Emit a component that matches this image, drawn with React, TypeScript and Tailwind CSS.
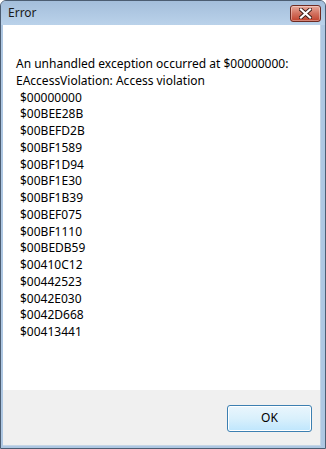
const ADDRESSES = [
  '$00000000',
  '$00BEE28B',
  '$00BEFD2B',
  '$00BF1589',
  '$00BF1D94',
  '$00BF1E30',
  '$00BF1B39',
  '$00BEF075',
  '$00BF1110',
  '$00BEDB59',
  '$00410C12',
  '$00442523',
  '$0042E030',
  '$0042D668',
  '$00413441',
];

function CloseButton() {
  return (
    <button className="relative w-[31px] h-[17px] rounded-[3px] border border-[#6e2b22] bg-gradient-to-b from-[#e8a99b] via-[#d2715f] to-[#c0402b] shadow-[inset_0_0_0_1px_rgba(255,255,255,0.35)] flex items-center justify-center">
      <svg width="13" height="11" viewBox="0 0 13 11">
        <path
          d="M2 1.5 L11 9.5 M11 1.5 L2 9.5"
          stroke="#3b1d18"
          strokeWidth="4"
          strokeLinecap="square"
        />
        <path
          d="M2 1.5 L11 9.5 M11 1.5 L2 9.5"
          stroke="#ffffff"
          strokeWidth="2.2"
          strokeLinecap="square"
        />
      </svg>
    </button>
  );
}

export default function App() {
  return (
    <div className="w-[326px] h-[449px] bg-white" style={{ fontFamily: '"Noto Sans", "Open Sans", sans-serif' }}>
      <div className="w-full h-full flex flex-col rounded-t-[6px] border border-[#4c5d72] bg-[#aec7e2] overflow-hidden">
        {/* title bar */}
        <div className="h-[24px] flex items-center justify-between pl-[7px] pr-[4px] bg-gradient-to-b from-[#a4bedb] to-[#bad2ea]">
          <span className="text-[12px] text-[#1a1a1a] leading-none">Error</span>
          <CloseButton />
        </div>

        {/* client */}
        <div className="flex-1 flex flex-col ml-[2px] mr-[4px] mb-[2px] border-r border-b border-[#c5d5e6]">
          <div className="flex-1 bg-white pt-[31px] pl-[13px] text-[12px] leading-[16.75px] text-black">
            <div>An unhandled exception occurred at $00000000:</div>
            <div>EAccessViolation: Access violation</div>
            {ADDRESSES.map((a) => (
              <div key={a} className="pl-[4px]">
                {a}
              </div>
            ))}
          </div>
          <div className="h-[55px] bg-[#f0f0f0] flex items-center justify-end pr-[8px] pt-[1px]">
            <button className="w-[85px] h-[27px] rounded-[3px] border border-[#3c7fb1] bg-gradient-to-b from-[#eaf6fd] via-[#d9f0fc] to-[#bee6fd] shadow-[inset_0_0_0_1px_#ffffff] text-[12px] text-black flex items-center justify-center">
              OK
            </button>
          </div>
        </div>
      </div>
    </div>
  );
}
